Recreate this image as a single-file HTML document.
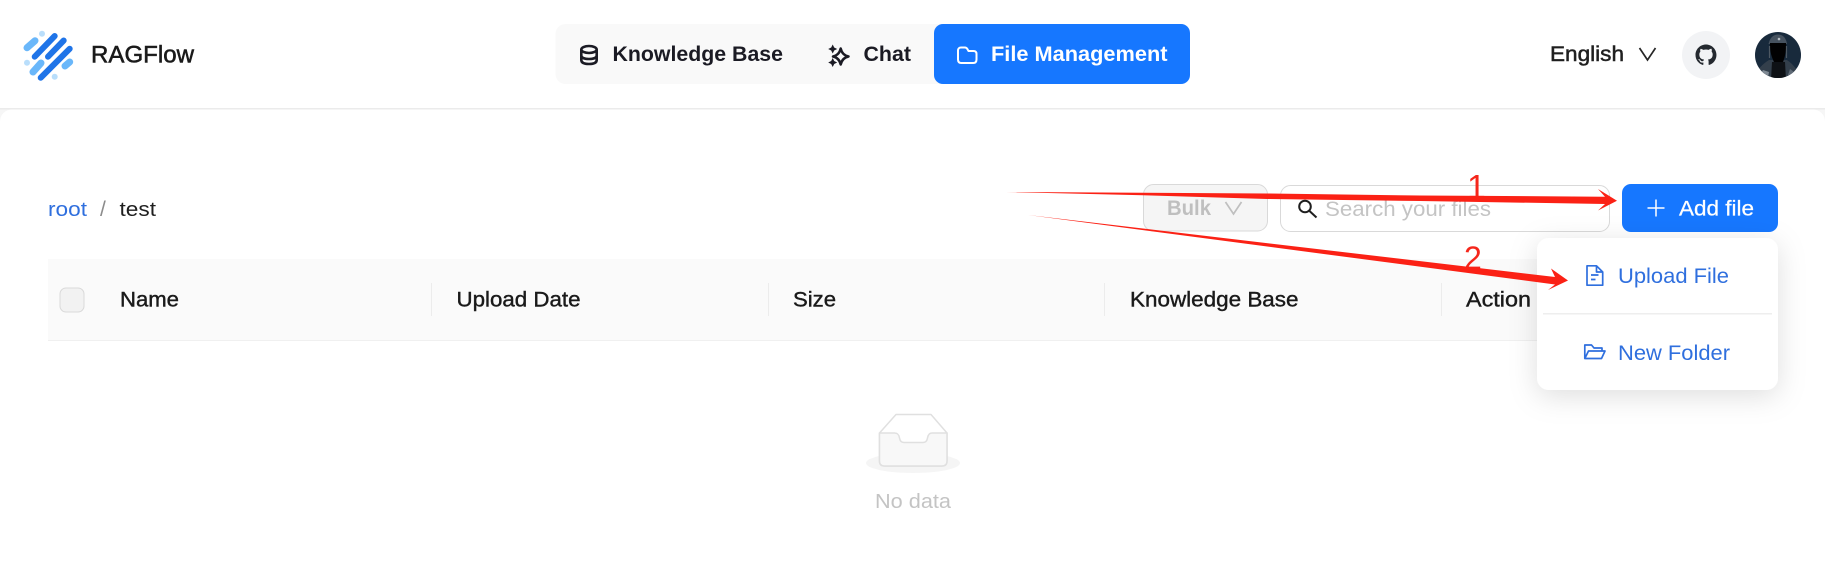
<!DOCTYPE html>
<html lang="en"><head><meta charset="utf-8"><title>RAGFlow</title>
<style>
html,body{margin:0;padding:0;width:1825px;height:571px;overflow:hidden;background:#fff}
svg{display:block}
text{font-family:"Liberation Sans",sans-serif}
.m{stroke-width:.4px}
</style></head><body>
<svg width="1825" height="571" viewBox="0 0 1825 571" xmlns="http://www.w3.org/2000/svg">
<defs>
<filter id="sh" x="-25%" y="-25%" width="150%" height="160%"><feDropShadow dx="0" dy="6" stdDeviation="14" flood-color="#000" flood-opacity=".13"/></filter>
<clipPath id="av"><circle cx="1778" cy="55" r="23"/></clipPath>
</defs>
<rect width="1825" height="571" fill="#fff"/>
<!-- header edge -->
<rect x="0" y="108" width="1825" height="16" fill="#f6f6f6"/>
<rect x="0" y="108" width="1825" height="1.500" fill="#ebebeb"/>
<rect x="0" y="109.500" width="1825" height="462" rx="12" fill="#fff"/>
<!-- logo -->
<g stroke-linecap="round" fill="none">
<g stroke="#1f74e8" stroke-width="6">
<path d="M34.700 56.700L54.700 36"/>
<path d="M48 56.700L63.700 40.500"/>
<path d="M40.700 77.700L69.700 48.700"/>
</g>
<g stroke="#6ab7fa" stroke-width="7">
<path d="M27 47.700L35 40.700"/>
<path d="M33 72L41 63"/>
<path d="M65 66L69.700 62"/>
</g>
</g>
<g fill="#b9defb"><circle cx="42" cy="33.700" r="3"/><circle cx="27" cy="62.700" r="3"/><circle cx="54.700" cy="76.700" r="3"/></g>
<text x="91" y="62.700" font-size="24" fill="#1a1a1a" stroke="#1a1a1a" style="stroke-width:.55px" textLength="103" lengthAdjust="spacingAndGlyphs">RAGFlow</text>
<!-- nav -->
<rect x="555.500" y="24" width="634" height="60" rx="10" fill="#f9f9f9"/>
<rect x="934" y="24" width="256" height="60" rx="9" fill="#1677ff"/>
<g fill="none" stroke="#1b1b24" stroke-width="2.600">
<ellipse cx="589" cy="49.500" rx="7.700" ry="3.500"/>
<path d="M581.300 49.500V60C581.300 62.800 584.500 64 589 64S596.700 62.800 596.700 60V49.500M581.300 55.500C581.300 57.800 584.500 59 589 59S596.700 57.800 596.700 55.500"/>
</g>
<text x="612.500" y="61" font-size="21" font-weight="700" fill="#1b1b24" textLength="170.500" lengthAdjust="spacingAndGlyphs">Knowledge Base</text>
<path d="M840.700 48.500C841.700 53 844 55.500 848.500 56.500C844 57.500 841.700 60 840.700 64.500C839.700 60 837.400 57.500 833 56.500C837.400 55.500 839.700 53 840.700 48.500Z" fill="none" stroke="#1b1b24" stroke-width="2.500" stroke-linejoin="round"/>
<path d="M832.700 44.500L834.200 47.500L837.200 49L834.200 50.500L832.700 53.500L831.200 50.500L828.200 49L831.200 47.500ZM832.700 58L834.200 61L837.200 62.500L834.200 64L832.700 67L831.200 64L828.200 62.500L831.200 61Z" fill="#1b1b24"/>
<text x="863.500" y="61" font-size="21" font-weight="700" fill="#1b1b24" textLength="47.500" lengthAdjust="spacingAndGlyphs">Chat</text>
<path d="M958 50.500C958 48.700 959.200 47.500 961 47.500H965C966 47.500 966.700 48 967.200 48.800L968.500 51H973.500C975.500 51 976.500 52.200 976.500 54V59.500C976.500 61.700 975.300 63 973.200 63H961.300C959.200 63 958 61.700 958 59.500Z" fill="none" stroke="#fff" stroke-width="2" stroke-linejoin="round"/>
<text x="991" y="61" font-size="21" font-weight="700" fill="#fff" textLength="176.500" lengthAdjust="spacingAndGlyphs">File Management</text>
<!-- right header -->
<text x="1550" y="61" font-size="21" fill="#1f1f1f" stroke="#1f1f1f" style="stroke-width:.5px" textLength="74" lengthAdjust="spacingAndGlyphs">English</text>
<path d="M1639.500 48L1647.500 60L1655.500 48" fill="none" stroke="#262626" stroke-width="1.700"/>
<circle cx="1706" cy="55" r="24" fill="#f2f3f5"/>
<g transform="translate(1695.500 44.500) scale(1.310)"><path fill="#24292f" d="M8 0C3.580 0 0 3.580 0 8c0 3.540 2.290 6.530 5.470 7.590.4.070.55-.17.55-.38 0-.19-.01-.82-.01-1.490-2.010.37-2.530-.49-2.690-.94-.09-.23-.48-.94-.82-1.130-.28-.15-.68-.52-.01-.53.63-.01 1.080.58 1.230.82.72 1.210 1.870.87 2.330.66.070-.52.28-.87.51-1.070-1.780-.2-3.640-.89-3.640-3.950 0-.87.31-1.590.82-2.150-.08-.2-.36-1.020.08-2.120 0 0 .67-.21 2.200.82.64-.18 1.320-.27 2-.27.68 0 1.360.09 2 .27 1.530-1.040 2.200-.82 2.200-.82.44 1.100.16 1.920.08 2.120.51.56.82 1.270.82 2.150 0 3.070-1.870 3.750-3.650 3.950.29.25.54.73.54 1.480 0 1.070-.01 1.930-.01 2.200 0 .21.15.46.55.38A8.013 8.013 0 0016 8c0-4.420-3.580-8-8-8z"/></g>
<g clip-path="url(#av)">
<rect x="1750" y="30" width="56" height="50" fill="#182a3c"/>
<path d="M1754 80C1756 71 1761 65 1769 60H1787C1794 65 1798 70 1801 80Z" fill="#333f4b"/>
<path d="M1757 78L1763 70L1769 72L1768 78Z" fill="#7f8993"/>
<path d="M1787 78L1790 69L1797 74L1798 78Z" fill="#5f6a76"/>
<path d="M1771 80L1772 62H1785L1786 80Z" fill="#0e1115"/>
<path d="M1768.500 44C1770 37 1774 34.500 1778 34.500C1782 34.500 1786 37 1787 44Z" fill="#46525f"/>
<path d="M1770 43H1786C1786.500 50 1785 57 1783 62H1774C1771.500 57 1769.500 50 1770 43Z" fill="#010102"/>
<path d="M1769.500 46V58M1786.500 46V58" stroke="#4d5862" stroke-width="1.200"/>
<circle cx="1779" cy="39" r="1.300" fill="#b6bdc3"/>
</g>
<!-- toolbar -->
<text x="48" y="216" font-size="20" fill="#2f6fde" textLength="39" lengthAdjust="spacingAndGlyphs">root</text>
<text x="100" y="216" font-size="21" fill="#8c8c8c">/</text>
<text x="119.500" y="216" font-size="20" fill="#1f1f1f" textLength="36.500" lengthAdjust="spacingAndGlyphs">test</text>
<rect x="1143.500" y="184.500" width="124" height="46.500" rx="10" fill="#f5f5f5" stroke="#d9d9d9"/>
<text x="1167" y="215" font-size="21" font-weight="700" fill="#bfbfbf" textLength="44" lengthAdjust="spacingAndGlyphs">Bulk</text>
<path d="M1225.500 202L1233.500 214L1241.500 202" fill="none" stroke="#bfbfbf" stroke-width="1.700"/>
<rect x="1280.500" y="185.500" width="329" height="46" rx="10" fill="#fff" stroke="#d9d9d9"/>
<circle cx="1305" cy="206.500" r="5.800" fill="none" stroke="#1f1f1f" stroke-width="2"/>
<path d="M1309.500 211L1316.500 217.500" stroke="#1f1f1f" stroke-width="2" fill="none"/>
<text x="1325" y="215.800" font-size="21" fill="#c4c4c4" textLength="166" lengthAdjust="spacingAndGlyphs">Search your files</text>
<rect x="1622" y="184" width="156" height="48" rx="9" fill="#1677ff"/>
<path d="M1656 199.500V216.500M1647.500 208H1664.500" stroke="#fff" stroke-width="1.500" fill="none"/>
<text x="1679" y="215.700" font-size="21" fill="#fff" stroke="#fff" style="stroke-width:.25px" textLength="75" lengthAdjust="spacingAndGlyphs">Add file</text>
<!-- table -->
<rect x="48" y="259" width="1729" height="81" fill="#fafafa"/>
<rect x="48" y="340" width="1729" height="1" fill="#f0f0f0"/>
<rect x="60" y="288" width="24" height="24" rx="6" fill="#f2f2f2" stroke="#d9d9d9"/>
<g fill="#ececec"><rect x="431" y="283" width="1" height="33"/><rect x="768" y="283" width="1" height="33"/><rect x="1104" y="283" width="1" height="33"/><rect x="1441" y="283" width="1" height="33"/></g>
<g font-size="21" fill="#1a1a1a" stroke="#1a1a1a" class="m">
<text x="120" y="306.700" textLength="59" lengthAdjust="spacingAndGlyphs">Name</text>
<text x="456.500" y="306.700" textLength="124" lengthAdjust="spacingAndGlyphs">Upload Date</text>
<text x="793" y="306.700" textLength="43" lengthAdjust="spacingAndGlyphs">Size</text>
<text x="1130" y="306.700" textLength="168.500" lengthAdjust="spacingAndGlyphs">Knowledge Base</text>
<text x="1466" y="306.700" textLength="65" lengthAdjust="spacingAndGlyphs">Action</text>
</g>
<!-- empty -->
<ellipse cx="913" cy="463" rx="47" ry="10" fill="#f5f5f5"/>
<path d="M879.500 433L896 414.500H931L947 433V461C947 464.500 945 466 942 466H884.500C881.500 466 879.500 464.500 879.500 461Z" fill="#fff" stroke="#e0e0e0" stroke-width="1.500" stroke-linejoin="round"/>
<path d="M879.500 433H894.500C898 433 899 435 899.500 438C900 441 901.500 442.500 904 442.500H923C925.500 442.500 927 441 927.500 438C928 435 929 433 932 433H947V461C947 464.500 945 466 942 466H884.500C881.500 466 879.500 464.500 879.500 461Z" fill="#f8f8f8" stroke="#e0e0e0" stroke-width="1.500" stroke-linejoin="round"/>
<text x="875" y="508" font-size="20" fill="#c4c4c4" textLength="76" lengthAdjust="spacingAndGlyphs">No data</text>
<!-- numbers (under arrows) -->
<text x="1467" y="198.500" font-size="34" fill="#f5261b">1</text>
<text x="1464" y="269" font-size="32" fill="#f5261b">2</text>
<!-- menu -->
<rect x="1537" y="238" width="241" height="152" rx="12" fill="#fff" filter="url(#sh)"/>
<rect x="1543" y="313" width="229" height="1.500" fill="#eeeeee"/>
<g fill="none" stroke="#2f6fde" stroke-width="1.700" stroke-linejoin="round">
<path d="M1587 265.800H1596.500L1602.700 272V285.200H1587ZM1596.500 265.800V272H1602.700M1591 275H1598.500M1591 279.500H1595.500"/>
<path d="M1584.800 358.500V345H1591.500L1594 348H1602V351M1584.800 358.500L1588.500 351H1605L1601.500 358.500Z"/>
</g>
<text x="1618" y="283" font-size="21" fill="#2f6fde" textLength="111" lengthAdjust="spacingAndGlyphs">Upload File</text>
<text x="1618" y="360" font-size="21" fill="#2f6fde" textLength="112" lengthAdjust="spacingAndGlyphs">New Folder</text>
<!-- arrows -->
<path d="M1006 192L1143 192.800L1267 193.500L1420 195.500L1605 196.700L1598 189L1617 200.700L1598 210.500L1605 204L1420 201L1267 199L1143 195.300Z" fill="#fb2115"/>
<path d="M1028 215L1555 277L1551 268.500L1568 280.500L1548 290L1555 284.500Z" fill="#fb2115"/>
</svg>
</body></html>
